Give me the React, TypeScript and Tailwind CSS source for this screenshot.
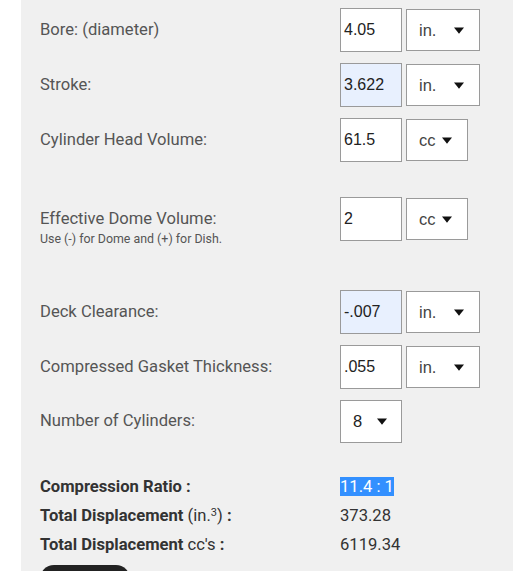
import React from "react";

const Arrow = () => (
  <svg width="10" height="7" viewBox="0 0 10 7" className="shrink-0">
    <path d="M0 0.5 L10 0.5 L5 6.8 Z" fill="#111" />
  </svg>
);

const Input = ({ value, filled }: { value: string; filled?: boolean }) => (
  <div
    className={`w-[62px] h-[44px] border border-[#9a9a9a] flex items-center pl-[3px] text-[16px] text-[#222] ${
      filled ? "bg-[#e8f0fe]" : "bg-white"
    }`}
    style={{ fontFamily: '"Liberation Sans", Arial, sans-serif' }}
  >
    {value}
  </div>
);

const Select = ({ value, w }: { value: string; w: string }) => (
  <div
    className={`${w} h-[42px] border border-[#9a9a9a] bg-white flex items-center justify-between pl-[12px] pr-[15px] text-[16.5px] text-[#444]`}
    style={{ fontFamily: '"Liberation Sans", Arial, sans-serif' }}
  >
    <span>{value}</span>
    <Arrow />
  </div>
);

const Row = ({
  label,
  children,
  className = "",
}: {
  label: React.ReactNode;
  children: React.ReactNode;
  className?: string;
}) => (
  <div className={`flex items-center h-[44px] ${className}`}>
    <div className="w-[300px] shrink-0 text-[16.6px] text-[#555]">{label}</div>
    <div className="flex items-center gap-[4px]">{children}</div>
  </div>
);

export default function App() {
  return (
    <div
      className="w-[521px] h-[571px] bg-white overflow-hidden"
      style={{ fontFamily: 'Roboto, "Liberation Sans", sans-serif' }}
    >
      <div className="ml-[21px] w-[492px] h-[571px] bg-[#f0f0f0] pl-[19px] pt-[8px]">
        <Row label="Bore: (diameter)" className="mb-[11px]">
          <Input value="4.05" />
          <Select value="in." w="w-[74px]" />
        </Row>
        <Row label="Stroke:" className="mb-[11px]">
          <Input value="3.622" filled />
          <Select value="in." w="w-[74px]" />
        </Row>
        <Row label="Cylinder Head Volume:" className="mb-[35px]">
          <Input value="61.5" />
          <Select value="cc" w="w-[62px]" />
        </Row>
        <div className="flex items-start h-[44px] mb-[49px]">
          <div className="w-[300px] shrink-0 pt-[10px]">
            <div className="text-[16.6px] leading-[24px] text-[#555]">Effective Dome Volume:</div>
            <div className="text-[12.4px] leading-[15px] text-[#555]">
              Use (-) for Dome and (+) for Dish.
            </div>
          </div>
          <div className="flex items-center gap-[4px]">
            <Input value="2" />
            <Select value="cc" w="w-[62px]" />
          </div>
        </div>
        <Row label="Deck Clearance:" className="mb-[11px]">
          <Input value="-.007" filled />
          <Select value="in." w="w-[74px]" />
        </Row>
        <Row label="Compressed Gasket Thickness:" className="mb-[11px]">
          <Input value=".055" />
          <Select value="in." w="w-[74px]" />
        </Row>
        <div className="flex items-center h-[43px] mb-[29px]">
          <div className="w-[300px] shrink-0 text-[16.6px] text-[#555]">Number of Cylinders:</div>
          <div
            className="w-[62px] h-[43px] border border-[#9a9a9a] bg-white flex items-center justify-between pl-[12px] pr-[14px] text-[16.5px] text-[#222]"
            style={{ fontFamily: '"Liberation Sans", Arial, sans-serif' }}
          >
            <span>8</span>
            <Arrow />
          </div>
        </div>
        <div className="text-[16.6px] leading-[29px] text-[#333]">
          <div className="flex">
            <div className="w-[300px] shrink-0 font-bold">Compression Ratio :</div>
            <div>
              <span className="bg-[#3390ff] text-white">11.4 : 1</span>
            </div>
          </div>
          <div className="flex">
            <div className="w-[300px] shrink-0">
              <span className="font-bold">Total Displacement</span>{" "}
              <span>
                (in.<sup className="text-[11px]">3</sup>)
              </span>{" "}
              <span className="font-bold">:</span>
            </div>
            <div>373.28</div>
          </div>
          <div className="flex">
            <div className="w-[300px] shrink-0">
              <span className="font-bold">Total Displacement</span> <span>cc's</span>{" "}
              <span className="font-bold">:</span>
            </div>
            <div>6119.34</div>
          </div>
        </div>
        <div className="mt-[6px] w-[90px] h-[40px] rounded-[14px] bg-[#222]" />
      </div>
    </div>
  );
}
